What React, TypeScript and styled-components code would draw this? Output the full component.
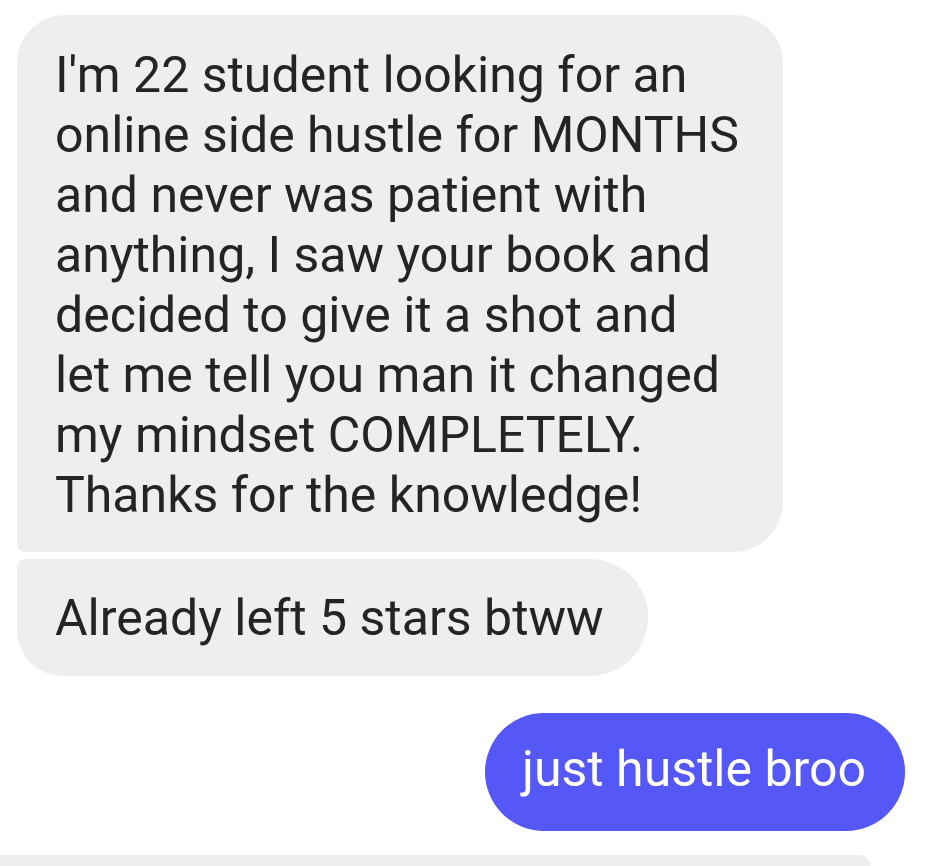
import React from "react"
import styled, { createGlobalStyle } from "styled-components"

const GlobalStyle = createGlobalStyle`
  html, body {
    margin: 0;
    padding: 0;
    background: #ffffff;
  }
  body {
    font-family: Roboto, "Noto Sans", sans-serif;
    overflow: hidden;
  }
`

const Thread = styled.div`
  display: flex;
  flex-direction: column;
  padding-top: 15px;
  width: 929px;
  height: 866px;
  overflow: hidden;
  box-sizing: border-box;
`

const Row = styled.div<{ $mine?: boolean; $gap: number }>`
  display: flex;
  justify-content: ${(p) => (p.$mine ? "flex-end" : "flex-start")};
  padding: ${(p) => (p.$mine ? "0 24px 0 0" : "0 0 0 17px")};
  margin-top: ${(p) => p.$gap}px;
`

const Bubble = styled.div<{ $radius: string; $width?: number; $pad: string }>`
  box-sizing: border-box;
  width: ${(p) => (p.$width ? `${p.$width}px` : "auto")};
  background: #eeeeee;
  color: #242424;
  font-size: 50px;
  line-height: 60px;
  border-radius: ${(p) => p.$radius};
  padding: ${(p) => p.$pad};
  white-space: pre-line;
`

const SentBubble = styled.div`
  box-sizing: border-box;
  height: 118px;
  display: flex;
  align-items: center;
  background: #5558f6;
  color: #ffffff;
  font-size: 50px;
  border-radius: 59px;
  padding: 0 39px 6px 37px;
`

const Peek = styled.div`
  margin-top: 24px;
  width: 870px;
  height: 80px;
  background: #eeeeee;
  border-radius: 0 50px 0 0;
`

const firstMessage = `I'm 22 student looking for an
online side hustle for MONTHS
and never was patient with
anything, I saw your book and
decided to give it a shot and
let me tell you man it changed
my mindset COMPLETELY.
Thanks for the knowledge!`

export default function App() {
  return (
    <>
      <GlobalStyle />
      <Thread>
        <Row $gap={0}>
          <Bubble $width={766} $radius="48px 48px 50px 8px" $pad="30px 38px 27px 38px">
            {firstMessage}
          </Bubble>
        </Row>
        <Row $gap={7}>
          <Bubble $width={631} $radius="8px 58px 58px 46px" $pad="29px 38px 28px 38px">
            Already left 5 stars btww
          </Bubble>
        </Row>
        <Row $mine $gap={37}>
          <SentBubble>just hustle broo</SentBubble>
        </Row>
        <Peek />
      </Thread>
    </>
  )
}
